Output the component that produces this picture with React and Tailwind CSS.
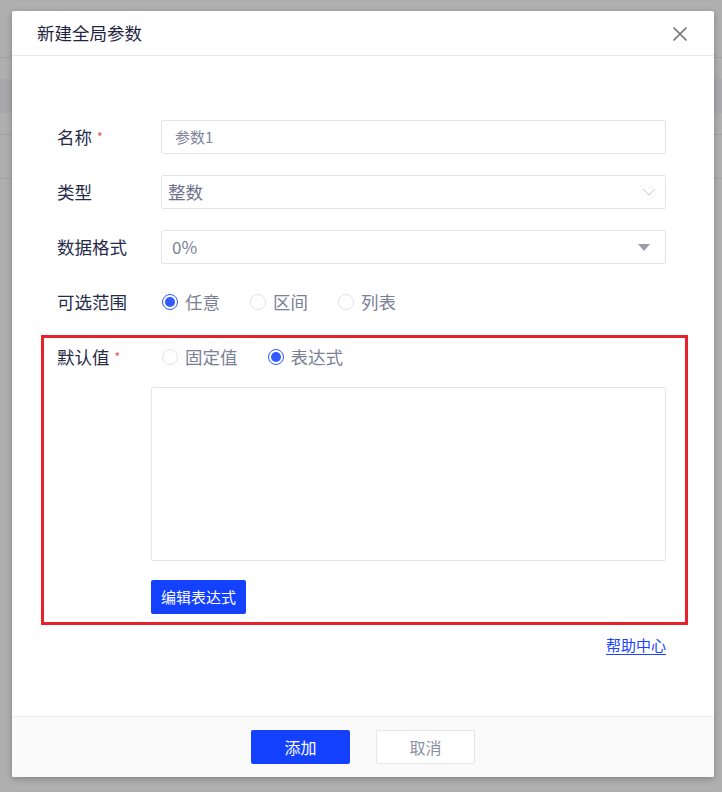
import React from "react";

const font = { fontFamily: '"Noto Sans CJK SC", "Noto Sans", sans-serif' };

function Radio({ checked, label }) {
  return (
    <label className="flex items-center gap-[7px] mr-[30px] text-[17.5px] text-[#7b8096]">
      <span
        className={
          "w-[16px] h-[16px] rounded-full border flex items-center justify-center bg-white " +
          (checked ? "border-[#2f5bff]" : "border-[#e2e3e8]")
        }
      >
        {checked && <span className="w-[10px] h-[10px] rounded-full bg-[#2f5bff]" />}
      </span>
      <span>{label}</span>
    </label>
  );
}

function Label({ children, required }) {
  return (
    <div className="w-[104px] shrink-0 flex items-center text-[17.5px] text-[#262b47]">
      <span>{children}</span>
      {required && <span className="ml-[5px] text-[12px] text-[#f04b4b] leading-none">*</span>}
    </div>
  );
}

export default function App() {
  return (
    <div className="relative w-[722px] h-[792px] overflow-hidden bg-[#afafaf]" style={font}>
      {/* background page structure */}
      <div className="flex flex-col">
        <div className="h-[57px]" />
        <div className="h-[1px] bg-[#a2a2a2]" />
        <div className="h-[21px]" />
        <div className="h-[34px] bg-[#a8a8aa]" />
        <div className="h-[21px]" />
        <div className="h-[1px] bg-[#a2a2a2]" />
        <div className="h-[43px]" />
        <div className="h-[1px] bg-[#a2a2a2]" />
      </div>

      {/* modal */}
      <div className="absolute left-[12px] top-[11px] w-[702px] h-[766px] bg-white rounded-[2px] shadow-[0_2px_6px_rgba(0,0,0,0.25)] flex flex-col">
        <div className="h-[45px] shrink-0 border-b border-[#e8e8ec] flex items-center justify-between pl-[25px] pr-[26px]">
          <span className="text-[17.5px] text-[#1f2541]">新建全局参数</span>
          <svg width="16" height="16" viewBox="0 0 16 16" className="mt-[1px]">
            <path d="M1.5 1.5 L14.5 14.5 M14.5 1.5 L1.5 14.5" stroke="#6f6f75" strokeWidth="1.6" />
          </svg>
        </div>

        <div className="flex-1 flex flex-col pl-[45px] pr-[48px] pt-[64px]">
          {/* 名称 */}
          <div className="flex h-[34px]">
            <Label required>名称</Label>
            <div className="flex-1 border border-[#e3e5ec] rounded-[2px] flex items-center pl-[13px] text-[15px] text-[#80859a]">
              参数1
            </div>
          </div>
          {/* 类型 */}
          <div className="flex h-[34px] mt-[21px]">
            <Label>类型</Label>
            <div className="flex-1 border border-[#e3e5ec] rounded-[2px] flex items-center justify-between pl-[6px] pr-[9px] text-[17.5px] text-[#6c7189]">
              <span>整数</span>
              <svg width="14" height="8" viewBox="0 0 14 8">
                <path d="M1 1 L7 7 L13 1" fill="none" stroke="#c3c5cf" strokeWidth="1" />
              </svg>
            </div>
          </div>
          {/* 数据格式 */}
          <div className="flex h-[34px] mt-[21px]">
            <Label>数据格式</Label>
            <div className="flex-1 border border-[#e3e5ec] rounded-[2px] flex items-center justify-between pl-[10px] pr-[15px] text-[17px] text-[#7b8096]">
              <span>0%</span>
              <svg width="12" height="7" viewBox="0 0 12 7">
                <path d="M0 0 L12 0 L6 7 Z" fill="#9b9ca8" />
              </svg>
            </div>
          </div>
          {/* 可选范围 */}
          <div className="flex h-[34px] mt-[21px]">
            <Label>可选范围</Label>
            <div className="flex items-center pl-[1px]">
              <Radio checked label="任意" />
              <Radio label="区间" />
              <Radio label="列表" />
            </div>
          </div>

          {/* 默认值 (highlighted) */}
          <div className="mt-[16px] -ml-[16px] -mr-[22px] border-[3px] border-[#e8202a] pl-[13px] pr-[19px] pt-[2px] pb-[8px] flex flex-col">
            <div className="flex h-[34px]">
              <Label required>默认值</Label>
              <div className="flex items-center pl-[1px]">
                <Radio label="固定值" />
                <Radio checked label="表达式" />
              </div>
            </div>
            <div className="ml-[94px] mt-[13px] h-[174px] border border-[#e3e5ec] rounded-[2px]" />
            <div className="ml-[94px] mt-[19px]">
              <button className="h-[34px] px-[10px] rounded-[2px] bg-[#1440ff] text-white text-[15px]">
                编辑表达式
              </button>
            </div>
          </div>

          <div className="flex justify-end mt-[9px]">
            <span className="text-[15px] text-[#1a44ff] underline underline-offset-[3px]">帮助中心</span>
          </div>
        </div>

        <div className="h-[61px] shrink-0 border-t border-[#ececef] bg-[#fafafa] flex items-center justify-center gap-[26px] rounded-b-[2px]">
          <button className="w-[99px] h-[34px] rounded-[2px] bg-[#1440ff] text-white text-[16px]">添加</button>
          <button className="w-[99px] h-[34px] rounded-[2px] bg-white border border-[#e3e5ec] text-[#8a8fa3] text-[16px]">
            取消
          </button>
        </div>
      </div>
    </div>
  );
}
